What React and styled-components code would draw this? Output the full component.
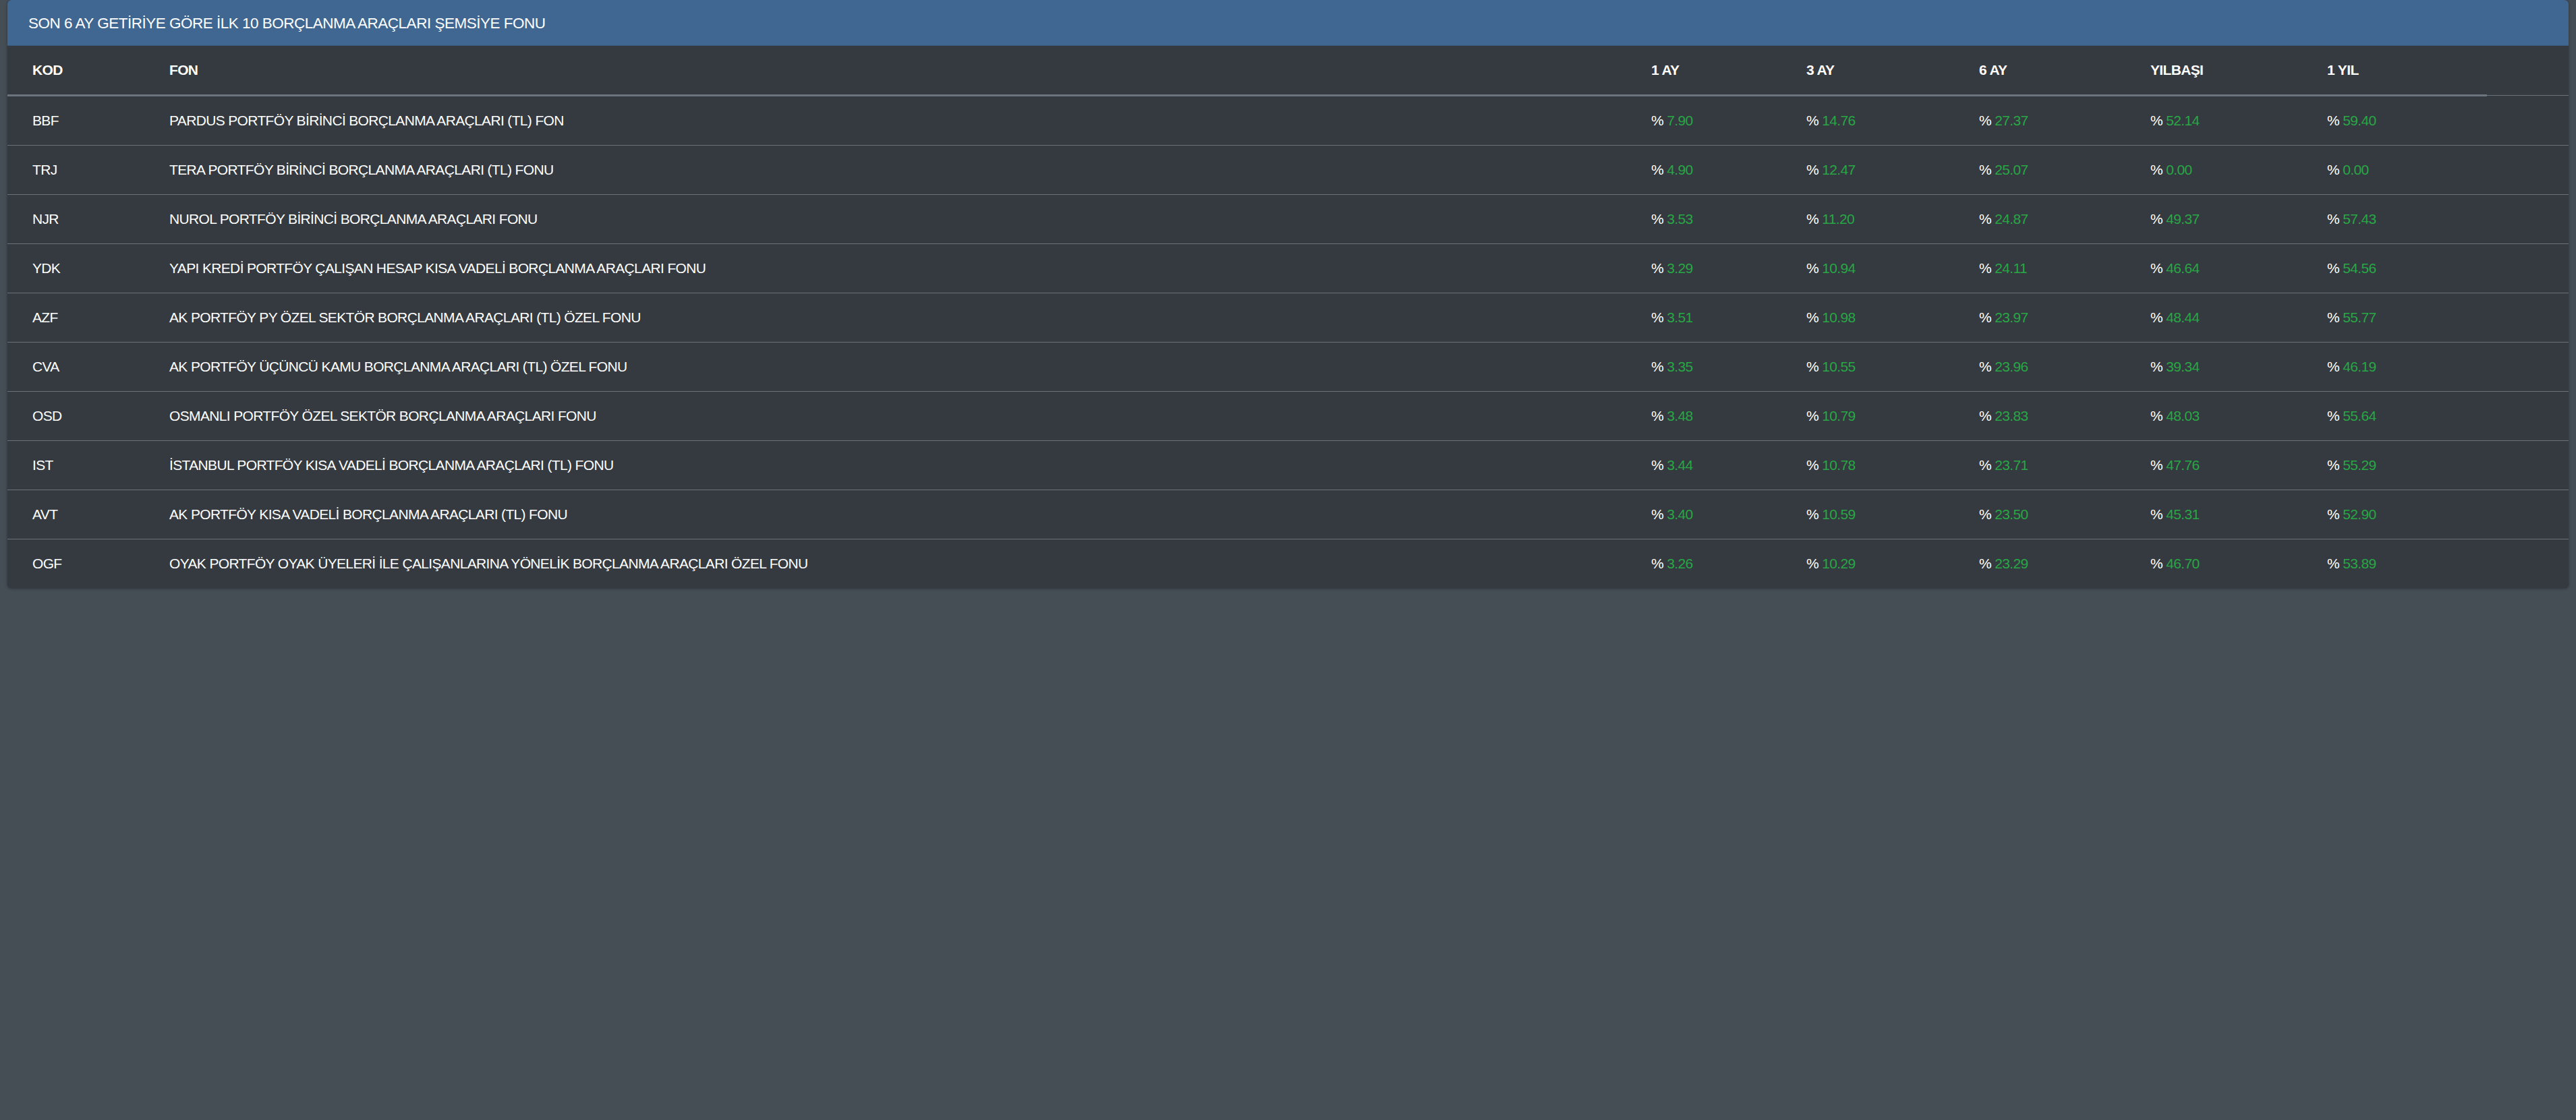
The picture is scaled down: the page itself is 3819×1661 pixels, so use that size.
import styled, { createGlobalStyle } from "styled-components";

const GlobalStyle = createGlobalStyle`
  html, body {
    margin: 0;
    padding: 0;
    background-color: #454d55;
    min-height: 100vh;
  }
  body {
    font-family: "Liberation Sans", Arial, sans-serif;
    color: #fff;
  }
`;

const Page = styled.main`
  padding: 0 11px;
  min-height: 1661px;
  box-sizing: border-box;
`;

const Card = styled.section`
  background-color: #343a40;
  border-radius: 6px;
  box-shadow: 0 0 1px rgba(0, 0, 0, 0.25), 0 1px 4px rgba(0, 0, 0, 0.3);
  overflow: hidden;
`;

const CardHeader = styled.header`
  background-color: #3f6791;
  border-bottom: 1px solid rgba(0, 0, 0, 0.125);
  padding: 19px 30px 16px 31px;

  h3 {
    margin: 0;
    font-size: 22.5px;
    letter-spacing: -0.5px;
    line-height: 32px;
    font-weight: 400;
    color: #fff;
  }
`;

const Table = styled.table`
  width: 100%;
  border-collapse: collapse;
  table-layout: fixed;
  font-size: 21px;
  letter-spacing: -0.65px;
  line-height: 36px;
`;

const HeadCell = styled.th`
  text-align: left;
  font-weight: 700;
  padding: 18px;
  padding-left: ${(p) => (p.$first ? "37px" : "18px")};
  border-bottom: ${(p) => (p.$filler ? "1px solid #6c7279" : "3px solid #6c757d")};
  white-space: nowrap;
`;

const Row = styled.tr`
  border-top: 1px solid #6c7279;
`;

const Cell = styled.td`
  padding: 18px;
  padding-left: ${(p) => (p.$first ? "37px" : "18px")};
  white-space: nowrap;
  font-weight: 400;
  color: #fff;
`;

const Value = styled.span`
  color: #28a745;
`;

const funds = [
  ["BBF", "PARDUS PORTFÖY BİRİNCİ BORÇLANMA ARAÇLARI (TL) FON", ["7.90", "14.76", "27.37", "52.14", "59.40"]],
  ["TRJ", "TERA PORTFÖY BİRİNCİ BORÇLANMA ARAÇLARI (TL) FONU", ["4.90", "12.47", "25.07", "0.00", "0.00"]],
  ["NJR", "NUROL PORTFÖY BİRİNCİ BORÇLANMA ARAÇLARI FONU", ["3.53", "11.20", "24.87", "49.37", "57.43"]],
  ["YDK", "YAPI KREDİ PORTFÖY ÇALIŞAN HESAP KISA VADELİ BORÇLANMA ARAÇLARI FONU", ["3.29", "10.94", "24.11", "46.64", "54.56"]],
  ["AZF", "AK PORTFÖY PY ÖZEL SEKTÖR BORÇLANMA ARAÇLARI (TL) ÖZEL FONU", ["3.51", "10.98", "23.97", "48.44", "55.77"]],
  ["CVA", "AK PORTFÖY ÜÇÜNCÜ KAMU BORÇLANMA ARAÇLARI (TL) ÖZEL FONU", ["3.35", "10.55", "23.96", "39.34", "46.19"]],
  ["OSD", "OSMANLI PORTFÖY ÖZEL SEKTÖR BORÇLANMA ARAÇLARI FONU", ["3.48", "10.79", "23.83", "48.03", "55.64"]],
  ["IST", "İSTANBUL PORTFÖY KISA VADELİ BORÇLANMA ARAÇLARI (TL) FONU", ["3.44", "10.78", "23.71", "47.76", "55.29"]],
  ["AVT", "AK PORTFÖY KISA VADELİ BORÇLANMA ARAÇLARI (TL) FONU", ["3.40", "10.59", "23.50", "45.31", "52.90"]],
  ["OGF", "OYAK PORTFÖY OYAK ÜYELERİ İLE ÇALIŞANLARINA YÖNELİK BORÇLANMA ARAÇLARI ÖZEL FONU", ["3.26", "10.29", "23.29", "46.70", "53.89"]],
];

const periods = ["1 AY", "3 AY", "6 AY", "YILBAŞI", "1 YIL"];
const widths = [222, 2197, 230, 256, 254, 262, 255];

const App = () => {
  return (
    <>
      <GlobalStyle />
      <Page>
        <Card>
          <CardHeader>
            <h3>SON 6 AY GETİRİYE GÖRE İLK 10 BORÇLANMA ARAÇLARI ŞEMSİYE FONU</h3>
          </CardHeader>
          <Table>
            <colgroup>
              {widths.map((w, idx) => (
                <col key={idx} style={{ width: w }} />
              ))}
              <col />
            </colgroup>
            <thead>
              <tr>
                <HeadCell $first>KOD</HeadCell>
                <HeadCell>FON</HeadCell>
                {periods.map((p) => (
                  <HeadCell key={p}>{p}</HeadCell>
                ))}
                <HeadCell $filler />
              </tr>
            </thead>
            <tbody>
              {funds.map(([code, name, values]) => (
                <Row key={code}>
                  <Cell $first>{code}</Cell>
                  <Cell>{name}</Cell>
                  {values.map((v, idx) => (
                    <Cell key={idx}>
                      % <Value>{v}</Value>
                    </Cell>
                  ))}
                  <Cell />
                </Row>
              ))}
            </tbody>
          </Table>
        </Card>
      </Page>
    </>
  );
};

export default App;
